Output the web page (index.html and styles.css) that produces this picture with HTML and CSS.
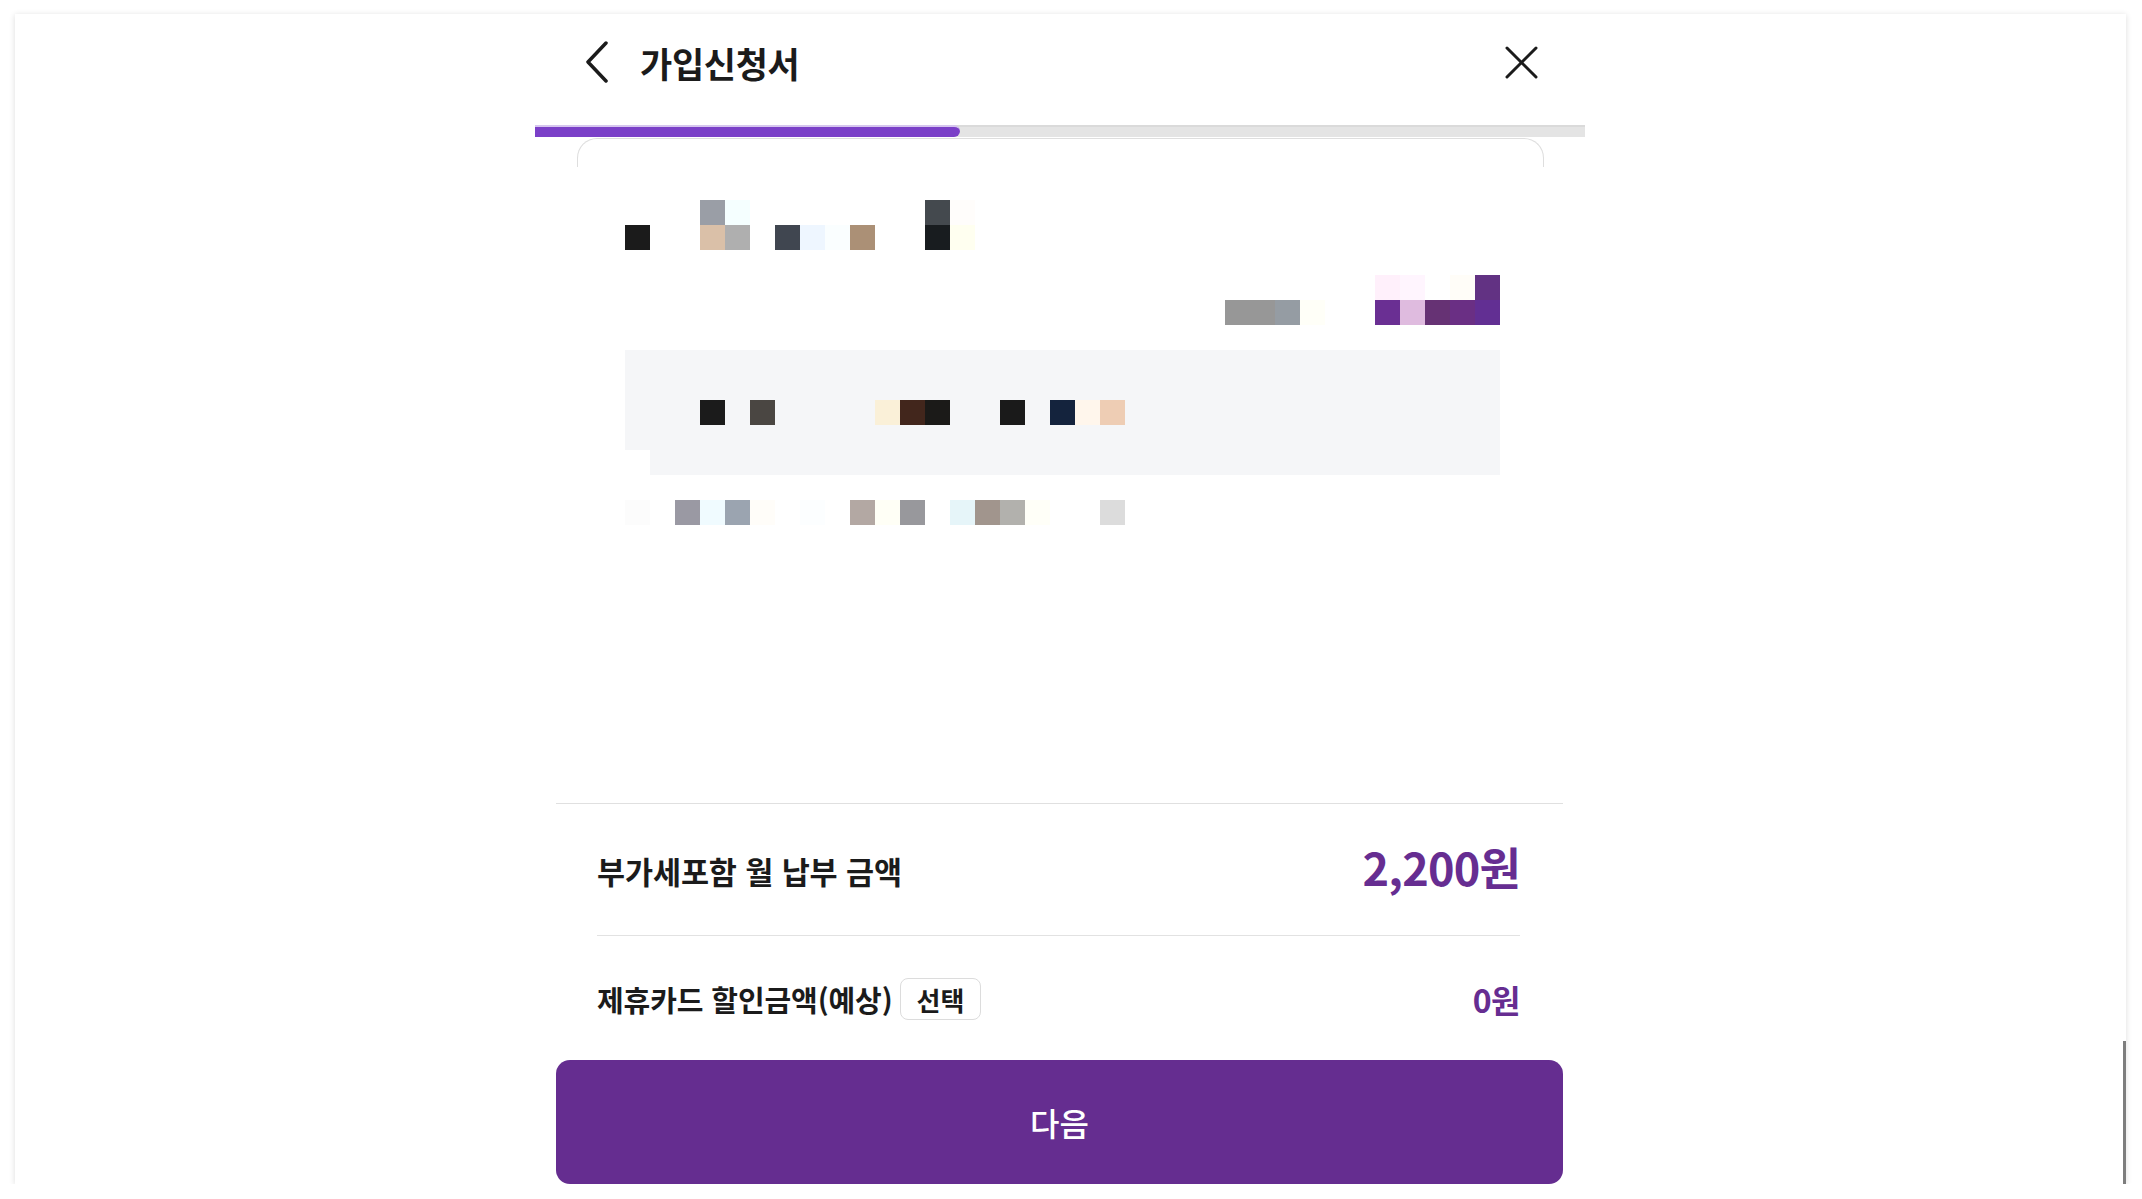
FILE: index.html
```html
<!DOCTYPE html>
<html lang="ko">
<head>
  <meta charset="utf-8">
  <title>가입신청서</title>
  <link rel="stylesheet" href="styles.css">
</head>
<body>
  <div class="window">
    <div class="sheet">
      <header class="top-bar">
        <button class="icon-btn back" aria-label="뒤로">
          <svg width="24" height="42" viewBox="0 0 24 42">
            <polyline points="20,2 2,21 20,40" fill="none" stroke="#1b1b1b" stroke-width="3.5" stroke-linecap="round" stroke-linejoin="round"/>
          </svg>
        </button>
        <h1 class="title">가입신청서</h1>
        <button class="icon-btn close" aria-label="닫기">
          <svg width="33" height="33" viewBox="0 0 33 33">
            <line x1="2" y1="2" x2="31" y2="31" stroke="#1b1b1b" stroke-width="3" stroke-linecap="round"/>
            <line x1="31" y1="2" x2="2" y2="31" stroke="#1b1b1b" stroke-width="3" stroke-linecap="round"/>
          </svg>
        </button>
      </header>

      <div class="progress"><div class="progress-fill"></div></div>
      <div class="card-edge"></div>

      <div class="mosaic" id="mosaic"></div>

      <footer class="summary">
        <div class="summary-row total">
          <span class="label">부가세포함 월 납부 금액</span>
          <span class="amount">2,200원</span>
        </div>
        <div class="summary-row discount">
          <span class="label">제휴카드 할인금액(예상)<button class="chip">선택</button></span>
          <span class="amount small">0원</span>
        </div>
        <button class="next-btn">다음</button>
      </footer>
    </div>
    <div class="scroll-thumb"></div>
  </div>

  <script>
    // blurred preview of the applicant info (25px cells)
    const cols = 35;
    const rowCount = 13;
    const shadedRows = [6, 7, 8, 9, 10];

    const cells = {
      0: { 3: '#9a9ea6', 4: '#f5ffff', 12: '#44494e', 13: '#fffdfb' },
      1: { 0: '#1b1b1b', 3: '#dac0a8', 4: '#afafaf', 6: '#404650', 7: '#eef6ff', 8: '#fafeff', 9: '#ab9076', 12: '#181c1f', 13: '#fffff0' },
      3: { 30: '#fff0fb', 31: '#fff5fe', 33: '#fffdf8', 34: '#623283' },
      4: { 24: '#979797', 25: '#979797', 26: '#959ca3', 27: '#fffff8', 30: '#6a2f93', 31: '#dfbbdf', 32: '#663274', 33: '#6a2f84', 34: '#622f93' },
      8: { 3: '#1b1b1b', 5: '#4a4642', 10: '#faf0d8', 11: '#42261c', 12: '#1b1a18', 15: '#1a1a1a', 17: '#14233d', 18: '#fff6ec', 19: '#eecdb4' },
      12: { 0: '#fcfcfc', 2: '#9a99a3', 3: '#f0fbff', 4: '#9ba4b0', 5: '#fffdf9', 7: '#fcfeff', 9: '#b3a8a3', 10: '#fffff6', 11: '#98989c', 13: '#e6f5f9', 14: '#a1958d', 15: '#b2b1ad', 16: '#fffff8', 19: '#dcdcdc' }
    };

    const mosaic = document.getElementById('mosaic');

    for (let r = 0; r < rowCount; r++) {
      for (let c = 0; c < cols; c++) {
        const cell = document.createElement('span');
        cell.className = 'cell';
        if (shadedRows.includes(r) && !(r === 10 && c === 0)) {
          cell.classList.add('shade');
        }
        const color = cells[r] && cells[r][c];
        if (color) {
          cell.style.background = color;
        }
        mosaic.appendChild(cell);
      }
    }
  </script>
</body>
</html>
```

FILE: styles.css
```css
body {
  margin: 0;
  background-color: #ffffff;
  font-family: "Noto Sans CJK KR", "Noto Sans", sans-serif;
  color: #1b1b1b;
}

.window {
  position: relative;
  margin: 14px 0 0 15px;
  width: 2111px;
  height: 1170px;
  background-color: #ffffff;
  box-shadow: 0 1px 6px rgba(0, 0, 0, 0.14);
  overflow: hidden;
  display: flex;
}

.sheet {
  width: 1050px;
  margin-left: 520px;
  display: flex;
  flex-direction: column;
}

/* header */

.top-bar {
  height: 96px;
  margin-bottom: 15px;
  padding: 0 47px 0 51px;
  display: flex;
  align-items: center;
}

.icon-btn {
  background: none;
  border: none;
  padding: 0;
  cursor: pointer;
  display: flex;
}

.back {
  margin-right: 30px;
}

.title {
  flex: 1;
  margin: 0;
  font-size: 35px;
  font-weight: 700;
  letter-spacing: -0.3px;
  color: #1b1b1b;
}

/* progress */

.progress {
  height: 10px;
  background-color: #e4e4e4;
  border-top: 2px solid #dadada;
}

.progress-fill {
  width: 40.5%;
  height: 10px;
  margin-top: -2px;
  background-color: #7b40c8;
  border-top: 2px solid #d6c6ef;
  border-radius: 0 6px 6px 0;
}

.card-edge {
  height: 28px;
  margin: 1px 41px 0 42px;
  border: 1px solid #dedede;
  border-bottom: none;
  border-radius: 20px 20px 0 0;
}

/* blurred preview */

.mosaic {
  margin: 33px 0 0 90px;
  display: grid;
  grid-template-columns: repeat(35, 25px);
  grid-auto-rows: 25px;
}

.cell.shade {
  background-color: #f5f6f8;
}

/* price summary */

.summary {
  margin: auto 22px 0 21px;
  border-top: 1px solid #e0e0e0;
}

.summary-row {
  margin: 0 43px 0 41px;
  display: flex;
  align-items: center;
  justify-content: space-between;
}

.summary-row.total {
  height: 132px;
  padding-top: 2px;
  box-sizing: border-box;
  border-bottom: 1px solid #e2e2e2;
}

.summary-row.discount {
  height: 42px;
  margin-top: 42px;
  margin-bottom: 40px;
}

.label {
  display: flex;
  align-items: center;
  font-size: 30.5px;
  font-weight: 700;
  letter-spacing: -0.1px;
  color: #1b1b1b;
}

.discount .label {
  font-size: 29px;
}

.chip {
  height: 42px;
  margin-left: 7px;
  padding: 0 16px;
  background-color: #ffffff;
  border: 1px solid #dcdcdc;
  border-radius: 8px;
  font-family: inherit;
  font-size: 26px;
  font-weight: 700;
  color: #1b1b1b;
  cursor: pointer;
}

.amount {
  margin-bottom: 8px;
  font-size: 45px;
  font-weight: 700;
  letter-spacing: -0.8px;
  color: #662d91;
}

.amount.small {
  margin-bottom: 0;
  font-size: 32px;
  letter-spacing: -0.5px;
}

.next-btn {
  display: block;
  width: 100%;
  height: 124px;
  padding-bottom: 2px;
  background-color: #652d90;
  border: none;
  border-radius: 14px;
  font-family: inherit;
  font-size: 32px;
  font-weight: 500;
  color: #ffffff;
  cursor: pointer;
}

.scroll-thumb {
  position: absolute;
  right: 0;
  bottom: 0;
  width: 3px;
  height: 143px;
  background-color: #7d7d7d;
}
```
